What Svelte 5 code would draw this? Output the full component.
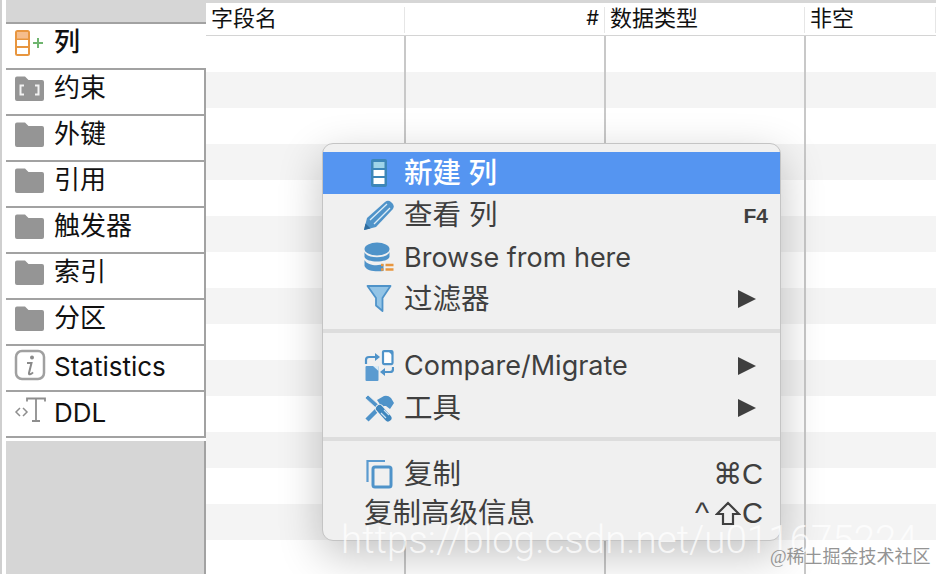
<script>
	const tabs = [
		{ label: '列', icon: 'columns', active: true, cjk: true },
		{ label: '约束', icon: 'constraint', cjk: true },
		{ label: '外键', icon: 'folder', cjk: true },
		{ label: '引用', icon: 'folder', cjk: true },
		{ label: '触发器', icon: 'folder', cjk: true },
		{ label: '索引', icon: 'folder', cjk: true },
		{ label: '分区', icon: 'folder', cjk: true },
		{ label: 'Statistics', icon: 'info' },
		{ label: 'DDL', icon: 'ddl' }
	];

	const rows = Array.from({ length: 15 }, (_, i) => i);
</script>

<div class="window">
	<aside class="sidebar">
		<div class="side-top"></div>
		{#each tabs as tab}
			<div class="tab" class:active={tab.active}>
				<span class="tab-icon">
					{#if tab.icon === 'columns'}
						<svg width="32" height="28" viewBox="0 0 32 28">
							<rect x="1" y="1" width="15" height="26" rx="2.5" fill="#e8963f" />
							<rect x="3" y="3" width="11" height="6.5" fill="#f5bd8c" />
							<rect x="3" y="11" width="11" height="6" fill="#fff" />
							<rect x="3" y="19" width="11" height="6" fill="#fff" />
							<path d="M24 9v10M19 14h10" stroke="#6fb56f" stroke-width="2" />
						</svg>
					{:else if tab.icon === 'constraint'}
						<svg width="32" height="28" viewBox="0 0 32 28">
							<path d="M1 3.5A2 2 0 0 1 3 1.5h8l3.5 3.5H28a2 2 0 0 1 2 2V24a2 2 0 0 1-2 2H3a2 2 0 0 1-2-2z" fill="#959595" />
							<path d="M10 10.5H6.5v9H10M21 10.5h3.5v9H21" fill="none" stroke="#f2f2f2" stroke-width="2" />
						</svg>
					{:else if tab.icon === 'folder'}
						<svg width="32" height="28" viewBox="0 0 32 28">
							<path d="M1 3.5A2 2 0 0 1 3 1.5h8l3.5 3.5H28a2 2 0 0 1 2 2V24a2 2 0 0 1-2 2H3a2 2 0 0 1-2-2z" fill="#959595" />
						</svg>
					{:else if tab.icon === 'info'}
						<svg width="32" height="32" viewBox="0 0 32 32">
							<rect x="2" y="2" width="28" height="28" rx="6" fill="#fff" stroke="#a0a0a0" stroke-width="2.5" />
							<circle cx="18" cy="8.5" r="2" fill="#8a8a8a" />
							<path d="M13 14h4.500l-2.500 10q-.3 1.500 1 1.300 1.500-.3 3-2" fill="none" stroke="#8a8a8a" stroke-width="2" />
						</svg>
					{:else}
						<svg width="32" height="28" viewBox="0 0 32 28">
							<path d="M6 11l-4 4 4 4M9 11l4 4-4 4" fill="none" stroke="#8e8e8e" stroke-width="1.5" />
							<path d="M13 4.500V1.500h18v3M22 1.500V24M18 24h8" fill="none" stroke="#8e8e8e" stroke-width="1.8" />
						</svg>
					{/if}
				</span>
				<span class="tab-label" class:cjk={tab.cjk}>{tab.label}</span>
			</div>
		{/each}
		<div class="side-fill"></div>
	</aside>

	<section class="table">
		<div class="head">
			<div class="hcell name">字段名</div>
			<div class="hcell num">#</div>
			<div class="hcell type">数据类型</div>
			<div class="hcell flag">非空</div>
		</div>
		{#each rows as r}
			<div class="row" class:odd={r % 2 === 1}>
				<div class="cell name"></div>
				<div class="cell num"></div>
				<div class="cell type"></div>
				<div class="cell flag"></div>
			</div>
		{/each}
	</section>

	<div class="menu">
		<div class="item selected">
			<span class="mi">
				<svg width="30" height="30" viewBox="0 0 30 30">
					<rect x="7" y="1" width="16" height="28" rx="2" fill="#3d86b8" />
					<rect x="9.5" y="4" width="11" height="6" fill="#9fd4e8" />
					<rect x="9.5" y="12" width="11" height="6" fill="#fff" />
					<rect x="9.5" y="20" width="11" height="6" fill="#fff" />
				</svg>
			</span>
			<span class="ml cjk">新建 列</span>
		</div>
		<div class="item">
			<span class="mi">
				<svg width="30" height="30" viewBox="0 0 30 30">
					<path d="M0 30l3-12L21 2q3-2.500 6 0l1.500 1.500q2.500 3 0 6L12 27z" fill="#4f93c9" />
					<path d="M6 20L23 4M10 24L26 8" stroke="#dcecf6" stroke-width="1.3" />
					<path d="M0 30l1.500-6.500 5 5z" fill="#2f6d9f" />
				</svg>
			</span>
			<span class="ml cjk">查看 列</span>
			<span class="key small">F4</span>
		</div>
		<div class="item">
			<span class="mi">
				<svg width="30" height="30" viewBox="0 0 30 30">
					<ellipse cx="13" cy="7" rx="12.5" ry="6.5" fill="#4f93c9" />
					<path d="M.5 10c2 7 23 7 25 0v5c-2 6-23 6-25 0z" fill="#4f93c9" />
					<path d="M.5 18c3 6 14 6 19 4v7c-8 1-17 0-19-5z" fill="#4f93c9" />
					<path d="M17 23h2.500M21.500 23h8M17 27.500h2.500M21.500 27.500h8" stroke="#e8963f" stroke-width="2.4" />
				</svg>
			</span>
			<span class="ml">Browse from here</span>
		</div>
		<div class="item">
			<span class="mi">
				<svg width="30" height="30" viewBox="0 0 30 30">
					<path d="M3.500 2h23L18.500 14v13L12 21.500V14z" fill="#93c4e6" stroke="#4f93c9" stroke-width="1.8" stroke-linejoin="round" />
				</svg>
			</span>
			<span class="ml cjk">过滤器</span>
			<span class="arrow"></span>
		</div>
		<div class="sep first"></div>
		<div class="item">
			<span class="mi">
				<svg width="30" height="32" viewBox="0 0 30 32">
					<rect x="19" y="1.100" width="9.500" height="13" rx="1" fill="#fff" stroke="#4f93c9" stroke-width="2.200" />
					<path d="M24 1h5v5z" fill="#4f93c9" />
					<rect x="1.500" y="16" width="13" height="15" rx="1" fill="#5b9bd0" />
					<path d="M9 16h5.500v5z" fill="#dcecf6" />
					<path d="M2 14v-4q0-3 3-3h7" fill="none" stroke="#4f93c9" stroke-width="2.200" />
					<path d="M11 3l5 4-5 4z" fill="#4f93c9" />
					<path d="M29 17v2q0 3-3 3h-6" fill="none" stroke="#4f93c9" stroke-width="2.200" />
					<path d="M21 18l-5 4 5 4z" fill="#4f93c9" />
				</svg>
			</span>
			<span class="ml nudge">Compare/Migrate</span>
			<span class="arrow"></span>
		</div>
		<div class="item">
			<span class="mi">
				<svg width="30" height="30" viewBox="0 0 30 30">
					<path d="M3 27L19 11" stroke="#4f93c9" stroke-width="4.500" />
					<path d="M13 7l7-4q4-1 7 2l3 5-4 6-4-3-5 0z" fill="#4f93c9" />
					<path d="M1 5l3-3 11 10-3 3z" fill="#4f93c9" stroke="#f0f0f0" stroke-width="0.800" />
					<path d="M15.500 15.500L24 25" stroke="#f0f0f0" stroke-width="9" stroke-linecap="round" />
					<path d="M15.500 15.500L24 25" stroke="#3f86bd" stroke-width="7" stroke-linecap="round" />
					<path d="M17 20l5 5M20 17l5 5" stroke="#cfe3f2" stroke-width="1.200" />
				</svg>
			</span>
			<span class="ml cjk">工具</span>
			<span class="arrow"></span>
		</div>
		<div class="sep second"></div>
		<div class="item">
			<span class="mi">
				<svg width="30" height="32" viewBox="0 0 30 32">
					<path d="M3.500 24V3H21" fill="none" stroke="#5b9bd0" stroke-width="2.200" />
					<rect x="9" y="9" width="18" height="20" rx="2" fill="none" stroke="#4f93c9" stroke-width="3" />
				</svg>
			</span>
			<span class="ml cjk">复制</span>
			<span class="key shortcut">⌘C</span>
		</div>
		<div class="item last">
			<span class="ml cjk">复制高级信息</span>
			<span class="key shortcut">
				<span class="ctrl">^</span>
				<svg class="shift" width="26" height="25" viewBox="0 0 26 25">
					<path d="M13 2L2 13h6v10h10V13h6z" fill="none" stroke="#3f3f3f" stroke-width="2.200" />
				</svg>C
			</span>
		</div>
	</div>

	<div class="mark-url">https://blog.csdn.net/u011675224</div>
	<div class="mark-site">@稀土掘金技术社区</div>
</div>

<style>
	:global(body) {
		margin: 0;
		background: #fff;
	}

	.window {
		position: relative;
		display: flex;
		width: 936px;
		height: 574px;
		overflow: hidden;
		font-family: Inter, 'Noto Sans CJK SC', sans-serif;
		color: #111;
		background: #fff;
	}

	.sidebar {
		display: flex;
		flex-direction: column;
		flex: none;
		box-sizing: border-box;
		width: 206px;
		padding-left: 6px;
		border-left: 2px solid #cfcfcf;
	}

	.side-top {
		flex: none;
		height: 22px;
		margin-left: -2px;
		background: #d6d6d6;
		border-bottom: 2px solid #a2a2a2;
	}

	.tab {
		display: flex;
		flex: none;
		align-items: center;
		box-sizing: border-box;
		height: 46px;
		margin-left: -2px;
		padding-bottom: 6px;
		border-bottom: 2px solid #a2a2a2;
		border-right: 2px solid #a2a2a2;
		font-size: 26px;
	}

	.tab.active {
		border-right: 0;
		font-weight: 500;
	}

	.tab-icon {
		display: flex;
		justify-content: center;
		flex: none;
		width: 32px;
		margin-left: 8px;
		margin-right: 8px;
	}

	.tab-label {
		padding-top: 2px;
	}

	.tab-label.cjk {
		padding-top: 0;
		padding-bottom: 8px;
	}

	.side-fill {
		flex: 1;
		margin-left: -2px;
		margin-top: 3px;
		background: #d6d6d6;
		border-right: 2px solid #a2a2a2;
	}

	.table {
		flex: 1;
		min-width: 0;
		border-top: 3px solid #d6d6d6;
	}

	.head,
	.row {
		display: grid;
		grid-template-columns: 199px 200px 200px 1fr;
	}

	.head {
		box-sizing: border-box;
		height: 33px;
		border-bottom: 1px solid #d4d4d4;
		font-size: 22px;
	}

	.hcell {
		box-sizing: border-box;
		height: 26px;
		margin-top: 4px;
		padding-left: 5px;
		line-height: 22px;
		border-right: 1px solid #e6e6e6;
	}

	.hcell.num {
		padding-right: 5px;
		text-align: right;
		font-size: 20px;
	}

	.row {
		height: 36px;
	}

	.row.odd {
		background: #f4f4f4;
	}

	.cell {
		margin-right: -1px;
		border-right: 2px solid #c8c8c8;
	}

	.cell.flag {
		border-right: 0;
	}

	.menu {
		position: absolute;
		left: 322px;
		top: 143px;
		box-sizing: border-box;
		width: 459px;
		height: 398px;
		padding-top: 8px;
		background: #f0f0f0;
		border: 1px solid #c4c4c4;
		border-radius: 11px;
		box-shadow: 0 14px 44px rgba(0, 0, 0, 0.24);
		color: #3f3f3f;
		font-size: 27px;
	}

	.item {
		display: flex;
		align-items: center;
		height: 42px;
		padding: 0 12px 0 41px;
	}

	.item.last {
		height: 36px;
	}

	.item.selected {
		background: #5595f1;
		color: #fff;
		font-weight: 500;
	}

	.mi {
		display: flex;
		justify-content: center;
		flex: none;
		width: 30px;
		margin-right: 10px;
	}

	.ml {
		flex: 1;
		white-space: nowrap;
	}

	.ml.cjk {
		padding-bottom: 6px;
		font-size: 28.5px;
	}

	.ml.nudge {
		padding-bottom: 2px;
	}

	.key {
		display: flex;
		align-items: center;
		font-size: 29px;
		line-height: 1;
		font-family: 'Liberation Sans', 'DejaVu Sans', sans-serif;
	}

	.key.small {
		font-size: 21px;
		font-weight: 700;
	}

	.key.shortcut {
		margin-right: 5px;
	}

	.ctrl {
		margin-right: 6px;
		font-size: 30px;
	}

	.shift {
		margin-right: 1px;
	}

	.arrow {
		flex: none;
		width: 0;
		height: 0;
		margin-right: 12px;
		border-top: 9px solid transparent;
		border-bottom: 9px solid transparent;
		border-left: 18px solid #3f3f3f;
	}

	.sep {
		height: 4px;
		background: #dddddd;
	}

	.sep.first {
		margin: 9px 0 12px;
	}

	.sep.second {
		margin: 8px 0 12px;
	}

	.mark-url {
		position: absolute;
		left: 341px;
		top: 516px;
		font-family: Roboto, 'Liberation Sans', sans-serif;
		font-weight: 300;
		font-size: 38.5px;
		line-height: 48px;
		color: rgba(255, 255, 255, 0.75);
		white-space: nowrap;
	}

	.mark-site {
		position: absolute;
		left: 770px;
		top: 545px;
		font-family: 'Liberation Serif', 'Noto Sans CJK SC', serif;
		font-size: 18px;
		line-height: 24px;
		color: #949494;
		white-space: nowrap;
	}
</style>
